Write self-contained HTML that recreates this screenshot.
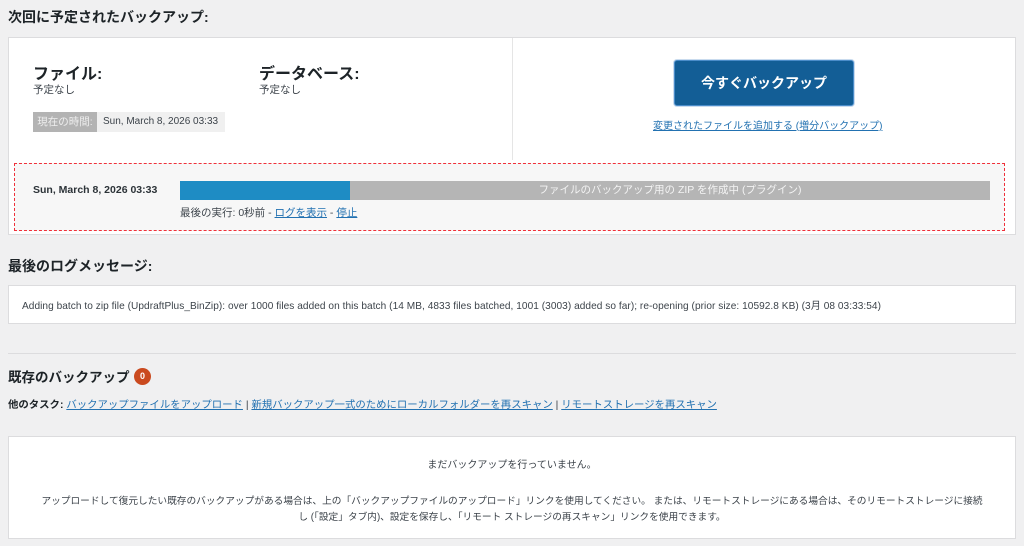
<!DOCTYPE html>
<html><head><meta charset="utf-8"><style>
*{margin:0;padding:0;box-sizing:border-box}
body{width:1024px;height:546px;background:#f0f0f1;font-family:"Liberation Sans","Noto Sans CJK JP",sans-serif;color:#3c434a;position:relative;overflow:hidden;font-size:11px}
.a{position:absolute;white-space:nowrap}
h2{position:absolute;font-size:14px;font-weight:bold;color:#1d2327;white-space:nowrap}
.box{position:absolute;background:#fff;border:1px solid #dcdcde}
a{color:#2271b1;text-decoration:underline}
</style></head><body>
<h2 style="left:8px;top:7px">次回に予定されたバックアップ:</h2>
<div class="box" style="left:8px;top:37px;width:1008px;height:198px"></div>
<div class="a" style="left:512px;top:38px;width:1px;height:122px;background:#e5e5e5"></div>
<div class="a" style="left:33px;top:60px;font-size:16px;font-weight:bold;color:#1d2327">ファイル:</div>
<div class="a" style="left:33px;top:82px;font-size:10.5px">予定なし</div>
<div class="a" style="left:259px;top:60px;font-size:16px;font-weight:bold;color:#1d2327">データベース:</div>
<div class="a" style="left:259px;top:82px;font-size:10.5px">予定なし</div>
<div class="a" style="left:33px;top:112px;width:64px;height:20px;background:#b3b3b3;color:#eee;font-size:10.5px;line-height:20px;text-align:center">現在の時間:</div>
<div class="a" style="left:97px;top:112px;width:128px;height:20px;background:#f0f0f0;font-size:10px;line-height:20px;padding-left:6px">Sun, March 8, 2026 03:33</div>
<div class="a" style="left:674px;top:60px;width:180px;height:46px;background:#135e96;border:1px solid #4a8cc9;border-radius:3px;color:#fff;font-size:14px;font-weight:bold;line-height:44px;text-align:center;box-shadow:0 0 0 1px #c9dbee">今すぐバックアップ</div>
<div class="a" style="left:653px;top:117px;font-size:10px"><a>変更されたファイルを追加する (増分バックアップ)</a></div>
<div class="a" style="left:14px;top:163px;width:991px;height:68px;background:#f7f7f7;border:1.5px dashed #f0303a"></div>
<div class="a" style="left:33px;top:184px;font-size:10.5px;font-weight:bold;color:#2c3338">Sun, March 8, 2026 03:33</div>
<div class="a" style="left:180px;top:181px;width:810px;height:19px;background:#b5b5b5"></div>
<div class="a" style="left:180px;top:181px;width:170px;height:19px;background:#1e8cc4"></div>
<div class="a" style="left:350px;top:181px;width:640px;height:19px;color:#f4f4f4;font-size:10.5px;line-height:19px;text-align:center">ファイルのバックアップ用の ZIP を作成中 (プラグイン)</div>
<div class="a" style="left:180px;top:205px;font-size:10.5px">最後の実行: 0秒前 - <a>ログを表示</a> - <a>停止</a></div>
<h2 style="left:8px;top:256px">最後のログメッセージ:</h2>
<div class="box" style="left:8px;top:285px;width:1008px;height:39px"></div>
<div class="a" style="left:22px;top:297px;font-size:10.1px;letter-spacing:0.05px">Adding batch to zip file (UpdraftPlus_BinZip): over 1000 files added on this batch (14 MB, 4833 files batched, 1001 (3003) added so far); re-opening (prior size: 10592.8 KB) (3月 08 03:33:54)</div>
<div class="a" style="left:8px;top:353px;width:1008px;height:1px;background:#dcdcde"></div>
<h2 style="left:8px;top:366px;font-size:13.5px">既存のバックアップ</h2>
<div class="a" style="left:134px;top:368px;width:17px;height:17px;border-radius:50%;background:#ca4a1f;color:#fff;font-size:9px;font-weight:bold;text-align:center;line-height:17px">0</div>
<div class="a" style="left:8px;top:396px;font-size:10.4px"><b style="color:#1d2327">他のタスク:</b> <a>バックアップファイルをアップロード</a> | <a>新規バックアップ一式のためにローカルフォルダーを再スキャン</a> | <a>リモートストレージを再スキャン</a></div>
<div class="box" style="left:8px;top:436px;width:1008px;height:103px"></div>
<div class="a" style="left:8px;top:456px;width:1008px;text-align:center;font-size:10px">まだバックアップを行っていません。</div>
<div class="a" style="left:8px;top:493px;width:1008px;text-align:center;font-size:9.7px">アップロードして復元したい既存のバックアップがある場合は、上の「バックアップファイルのアップロード」リンクを使用してください。 または、リモートストレージにある場合は、そのリモートストレージに接続</div>
<div class="a" style="left:8px;top:509px;width:1008px;text-align:center;font-size:9.7px">し (「設定」タブ内)、設定を保存し、「リモート ストレージの再スキャン」リンクを使用できます。</div>
</body></html>
